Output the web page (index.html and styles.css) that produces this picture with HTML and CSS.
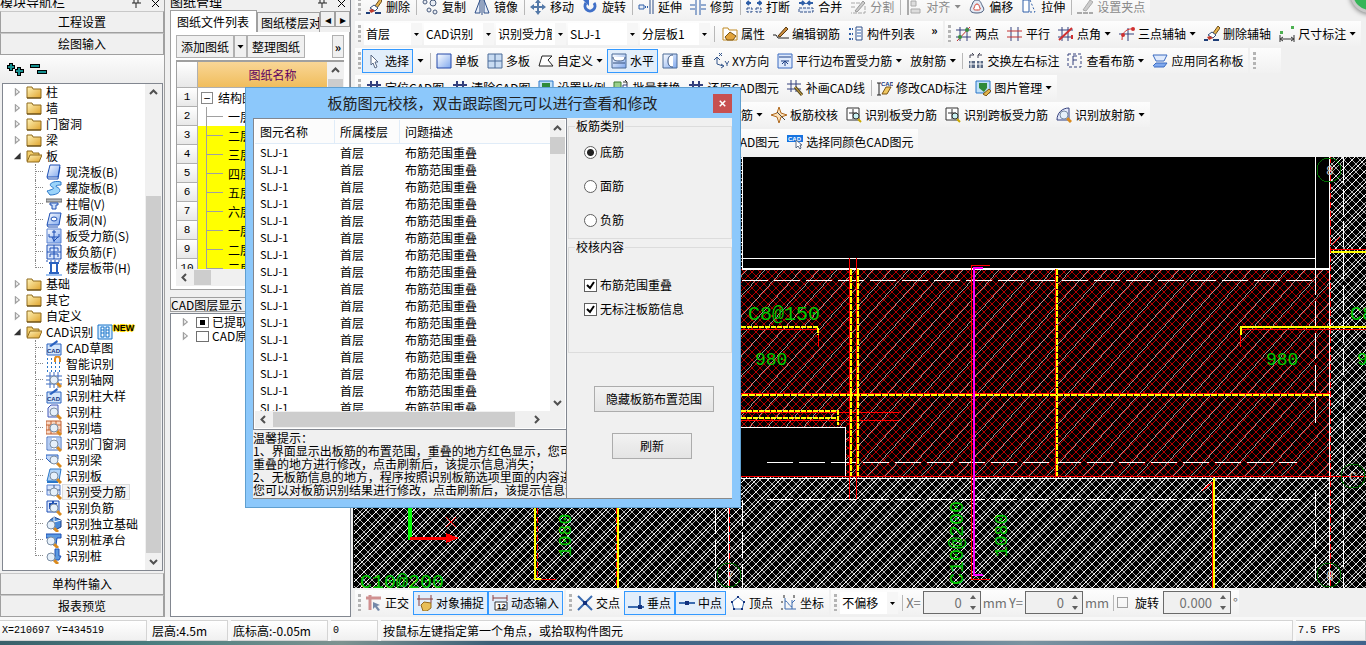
FILE: index.html
```html
<!DOCTYPE html>
<html lang="zh-CN">
<head>
    <meta charset="UTF-8">
    <meta name="viewport" content="width=device-width, initial-scale=1.0">
    <title>板筋图元校核</title>
    <link rel="stylesheet" href="styles.css">
</head>
<body>
    <!-- icon sprite -->
    <svg class="sprite" aria-hidden="true">
        <defs>
            <linearGradient id="gBlue" x1="0" y1="0" x2="1" y2="1"><stop offset="0" stop-color="#fff"/><stop offset="1" stop-color="#7fa8ee"/></linearGradient>
            <linearGradient id="gGold" x1="0" y1="0" x2="1" y2="1"><stop offset="0" stop-color="#fff3b8"/><stop offset="1" stop-color="#dfa32c"/></linearGradient>
        </defs>
        <symbol id="folder" viewBox="0 0 16 16"><path d="M1 3h5l1 2h8v9H1z" fill="url(#gGold)" stroke="#8f6a1c"/><path d="M1 14h14" stroke="#5c4310"/></symbol>
        <symbol id="folder-open" viewBox="0 0 16 16"><path d="M1 13V3h5l1 2h6v3" fill="#f3cf6c" stroke="#8f6a1c"/><path d="M4 7h12l-3 7H1z" fill="url(#gGold)" stroke="#8f6a1c"/></symbol>
        <symbol id="magnifier" viewBox="0 0 16 16"><path d="M11 11l4 4" stroke="#d98a1e" stroke-width="3"/><circle cx="8" cy="8" r="4" fill="#e6f0fa" stroke="#7c8ea3"/></symbol>
        <symbol id="slab" viewBox="0 0 16 16"><path d="M4 1h10l-2 12H1z" fill="url(#gBlue)" stroke="#1c4fb4"/><path d="M1 13l1 2h10l2-12" fill="none" stroke="#1c4fb4"/></symbol>
        <symbol id="spiral" viewBox="0 0 16 16"><path d="M15 2C8 0 1 4 6 7c3 1 2 2-5 4l3 4c9 0 13-5 7-8-3-1 0-2 4-2z" fill="#9bd4fa" stroke="#2a77c9"/></symbol>
        <symbol id="cap" viewBox="0 0 16 16"><path d="M0 3h16v3H0z" fill="#b8bcc0" stroke="#666"/><path d="M4 7h8v2h-2v4H6V9H4z" fill="#cfe0fa" stroke="#1c4fb4"/></symbol>
        <symbol id="hole" viewBox="0 0 16 16"><path d="M4 1h11l-2 12H1z" fill="url(#gBlue)" stroke="#1c4fb4"/><ellipse cx="8" cy="7" rx="3" ry="2" fill="#fff" stroke="#1c4fb4"/><path d="M1 13l1 2h10" fill="none" stroke="#1c4fb4"/></symbol>
        <symbol id="rebar" viewBox="0 0 16 16"><path d="M1 1h14v14H1z" fill="url(#gBlue)" stroke="#5a82d0"/><path d="M8 2v12M3 6v3h10V6M6 9l2 4 4-4M6 4h4" fill="none" stroke="#1c4fb4"/></symbol>
        <symbol id="negative" viewBox="0 0 16 16"><path d="M1 1h14v14H1z" fill="#dbe7fc" stroke="#1c4fb4"/><path d="M8 1v14M4 7V4h8v3M4 13v-3h8v3M1 8h14" fill="none" stroke="#1c4fb4"/></symbol>
        <symbol id="band" viewBox="0 0 16 16"><path d="M5 3v10M11 3v10M3 3h10M3 13h10" stroke="#2a62c0" stroke-width="2"/><path d="M0 15h16" stroke="#9cc0f0" stroke-width="2"/><path d="M0 1h16" stroke="#1c4fb4" stroke-dasharray="2"/></symbol>
        <symbol id="cad" viewBox="0 0 16 16"><path d="M1 4h14v11H1z" fill="#d4e6fb" stroke="#2a62c0"/><path d="M3 6l8-6 1 2-7 5z" fill="#2a62c0"/><text x="1" y="13" class="cad-label">CAD</text></symbol>
        <symbol id="smart" viewBox="0 0 16 16"><path d="M1 3h6M1 7h15M1 11h15M1 15h15" stroke="#2a77c9" stroke-width="2" stroke-dasharray="1 3"/><path d="M9 6V3a2 2 0 0 1 5 0v3" fill="none" stroke="#e08a1c" stroke-width="2"/></symbol>
        <symbol id="find-grid" viewBox="0 0 16 16"><path d="M4 0v16M8 0v16M12 0v16M0 4h16M0 8h16M0 12h16" stroke="#3a6bc0"/><use href="#magnifier"/></symbol>
        <symbol id="find-column" viewBox="0 0 16 16"><path d="M2 4l3-3h7v12H2z" fill="#e4e9fb" stroke="#4058b8"/><use href="#magnifier"/></symbol>
        <symbol id="find-wall" viewBox="0 0 16 16"><path d="M0 1h15v13H0z" fill="#fbd9c4" stroke="#c06030"/><path d="M0 5h15M0 10h15M5 1v4M10 1v4M3 5v5M5 10v4" stroke="#c06030"/><use href="#magnifier"/></symbol>
        <symbol id="find-door" viewBox="0 0 16 16"><path d="M1 1h14v13H1z" fill="#fff" stroke="#3a6bc0"/><path d="M2 2h4v11H2zM10 2h4v11h-4z" fill="#b4cdf5"/><use href="#magnifier"/></symbol>
        <symbol id="find-beam" viewBox="0 0 16 16"><path d="M0 3h12v4H5v4L0 6z" fill="#c2d8fa" stroke="#2a62c0"/><use href="#magnifier"/></symbol>
        <symbol id="find-slab" viewBox="0 0 16 16"><path d="M4 1h11l-2 12H1z" fill="#b2d4f8" stroke="#2a77c9"/><path d="M1 14h11" stroke="#2a77c9" stroke-width="2"/><use href="#magnifier"/></symbol>
        <symbol id="find-rebar" viewBox="0 0 16 16"><path d="M1 1h13v10H1z" fill="#dbe7fc" stroke="#5a82d0"/><path d="M8 1v10M1 6h13" stroke="#3a5890"/><use href="#magnifier"/></symbol>
        <symbol id="find-negative" viewBox="0 0 16 16"><path d="M1 1h12v11H1z" fill="#dbe7fc" stroke="#1c4fb4"/><path d="M4 9V4h7M7 1v11" fill="none" stroke="#1c4fb4" stroke-width="2"/><use href="#magnifier"/></symbol>
        <symbol id="find-base" viewBox="0 0 16 16"><path d="M3 5l5-4 7 3v7l-6 3-6-4z" fill="#4a8ad8" stroke="#1c3f84"/><path d="M8 1v5l7-2M8 6l-5-1" fill="none" stroke="#fff"/><use href="#magnifier" x="-3" y="1"/></symbol>
        <symbol id="find-pilecap" viewBox="0 0 16 16"><path d="M0 2h15v4h-4l-1 7H7V6H0z" fill="#5c9ae0" stroke="#1c4fb4"/><use href="#magnifier" x="-3" y="1"/></symbol>
        <symbol id="find-pile" viewBox="0 0 16 16"><path d="M9 1h4v7h2l-2 4H7V9h2z" fill="#5c9ae0" stroke="#1c4fb4"/><use href="#magnifier" x="-3" y="1"/></symbol>
        <symbol id="book" viewBox="0 0 16 16"><path d="M1 1h14v14H1z" fill="#d7ecff" stroke="#1673c8"/><path d="M4 3h3v10H4zM9 3h3v10H9zM4 6h3M9 6h3M4 9h3M9 9h3" fill="#fff" stroke="#1673c8"/></symbol>
        <symbol id="eraser" viewBox="0 0 16 16"><path d="M9 7l5-7 2 2-5 7z" fill="#e9b64f" stroke="#6b4e1e"/><path d="M4 9l4-3 4 3-3 3z" fill="#fff" stroke="#34507c"/><path d="M3 11l3-1 3 2-4 2z" fill="#c23b2c"/><path d="M0 14h4M9 14h6" stroke="#1d3d78" stroke-width="2"/></symbol>
        <symbol id="copy" viewBox="0 0 16 16"><g fill="#e8ecf3" stroke="#4a5c7c"><circle cx="3" cy="3" r="2"/><circle cx="11" cy="4" r="3"/><circle cx="7" cy="11" r="2"/><circle cx="13" cy="13" r="2"/></g></symbol>
        <symbol id="mirror" viewBox="0 0 16 16"><path d="M6 1v13H1zM10 1v13h5z" fill="#e6edf8" stroke="#2f4f88"/><path d="M8 0v16" stroke="#2f4f88"/></symbol>
        <symbol id="move" viewBox="0 0 16 16"><path d="M8 0l3 4H9v3h3V5l4 3-4 3V9H9v3h2l-3 4-3-4h2V9H4v2L0 8l4-3v2h3V4H5z" fill="#5479a8"/></symbol>
        <symbol id="rotate" viewBox="0 0 16 16"><path d="M4 4a5 5 0 1 0 8 0" fill="none" stroke="#4070c8" stroke-width="3"/><path d="M1 1h6v6z" fill="#4070c8"/></symbol>
        <symbol id="extend" viewBox="0 0 16 16"><path d="M1 6h5v4H1z" fill="#e6edf8" stroke="#2f5fa8"/><path d="M7 8h4" stroke="#2f5fa8" stroke-width="2" stroke-dasharray="1"/><path d="M12 1v14M15 1v14" stroke="#2f4f88"/></symbol>
        <symbol id="trim" viewBox="0 0 16 16"><path d="M6 0v16M10 0v16M0 6h5M11 6h5M0 10h5M11 10h5" stroke="#2f5fa8"/></symbol>
        <symbol id="break" viewBox="0 0 16 16"><path d="M5 4H1l2-2M1 4l2 2M11 4h4l-2-2M15 4l-2 2" fill="none" stroke="#2f5fa8" stroke-width="2"/><path d="M1 9h5v4H1zM10 9h5v4h-5z" fill="#e6edf8" stroke="#2f4f88" stroke-dasharray="3 1"/></symbol>
        <symbol id="merge" viewBox="0 0 16 16"><path d="M1 4h5L4 2M6 4L4 6M15 4h-5l2-2M10 4l2 2" fill="none" stroke="#2f5fa8" stroke-width="2"/><path d="M1 9h14v4H1z" fill="#e6edf8" stroke="#2f4f88" stroke-dasharray="3 1"/></symbol>
        <symbol id="split" viewBox="0 0 16 16"><path d="M1 4h10M15 7v7H1M1 8h5" fill="none" stroke="#a8a8a8" stroke-dasharray="4 1"/><path d="M5 12l8-10 2 2-8 9z" fill="#ccc" stroke="#999"/></symbol>
        <symbol id="align" viewBox="0 0 16 16"><path d="M2 0v16" stroke="#aaa" stroke-width="2"/><path d="M5 2h5v5H5zM5 10h9v4H5z" fill="#ddd" stroke="#aaa"/></symbol>
        <symbol id="offset" viewBox="0 0 16 16"><path d="M8 1c4 0 4 4 6 7s0 6-6 6-8-2-6-6 2-7 6-7z" fill="#e4eaf4" stroke="#4a5c7c"/><path d="M8 5c2 0 2 2 3 4s-1 2-3 2-4 0-3-2 1-4 3-4z" fill="#fff" stroke="#d03a2a"/></symbol>
        <symbol id="stretch" viewBox="0 0 16 16"><path d="M2 1h6v12H2z" fill="#fff" stroke="#2f5fa8"/><path d="M9 1l5 12H9" fill="none" stroke="#2f5fa8" stroke-dasharray="2"/></symbol>
        <symbol id="grip-point" viewBox="0 0 16 16"><path d="M0 14h16" stroke="#aaa" stroke-width="2" stroke-dasharray="5 1"/><path d="M6 11l7-10 3 2-7 9z" fill="#ccc" stroke="#aaa"/></symbol>
        <symbol id="props" viewBox="0 0 16 16"><path d="M1 2h5l1 2h8v10H1z" fill="#fff" stroke="#c08a24"/><path d="M3 11l5-5 6 4-3 4H5z" fill="#e2a33a" stroke="#7a5414"/></symbol>
        <symbol id="edit-bar" viewBox="0 0 16 16"><path d="M0 9h3l2 3h11" fill="none" stroke="#222"/><path d="M5 10l8-9 2 2-8 8z" fill="#c98a3a" stroke="#5a3a10"/></symbol>
        <symbol id="list" viewBox="0 0 16 16"><path d="M1 3h4M1 8h4M1 13h4" stroke="#2f5fa8" stroke-width="2" stroke-dasharray="2 1"/><path d="M8 1h6v13H8z" fill="#fff" stroke="#2f4f88"/><path d="M9 4h4M9 7h4M9 10h4" stroke="#2f5fa8"/></symbol>
        <symbol id="two-point" viewBox="0 0 16 16"><path d="M4 1v14M11 1v14M0 4h15M0 11h15" stroke="#34407c"/><path d="M1 15L14 1" stroke="#c23030"/><circle cx="4" cy="11" r="2" fill="#3a9040"/><circle cx="11" cy="4" r="2" fill="#3a9040"/></symbol>
        <symbol id="parallel" viewBox="0 0 16 16"><path d="M4 1v14M11 1v14" stroke="#34407c"/><path d="M0 5h15M0 11h15" stroke="#c23030"/></symbol>
        <symbol id="angle" viewBox="0 0 16 16"><path d="M4 1v14M10 1v14M0 4h15M0 11h15" stroke="#34407c"/><path d="M1 14L14 2M14 9v4" stroke="#d03030" stroke-width="2"/></symbol>
        <symbol id="three-point" viewBox="0 0 16 16"><path d="M9 2v13M0 8h15" stroke="#34407c"/><path d="M3 14C3 6 8 2 15 3" fill="none" stroke="#d03030"/><circle cx="14" cy="3" r="2" fill="#d03030"/><circle cx="4" cy="9" r="2" fill="#d03030"/></symbol>
        <symbol id="dimension" viewBox="0 0 16 16"><path d="M1 9v7M15 9v7M2 13h12M4 11l-3 2 3 2M12 11l3 2-3 2" fill="none" stroke="#333"/><path d="M1 5h3v3H1zM12 0h3v3h-3z" fill="#4caf50"/></symbol>
        <symbol id="cursor" viewBox="0 0 16 16"><path d="M5 2v10l2-2 2 5 2-1-2-5h3z" fill="#fff" stroke="#5a6a85"/></symbol>
        <symbol id="single" viewBox="0 0 16 16"><path d="M1 1h14v14H1z" fill="url(#gBlue)" stroke="#2448a8"/></symbol>
        <symbol id="multi" viewBox="0 0 16 16"><path d="M1 1h14v14H1z" fill="#c9dcf2" stroke="#4a6a98"/><path d="M8 1v14M1 8h14" stroke="#4a6a98"/></symbol>
        <symbol id="custom" viewBox="0 0 16 16"><path d="M4 3h10l-4 4 5 6H1z" fill="#fff" stroke="#222"/></symbol>
        <symbol id="horizontal" viewBox="0 0 16 16"><path d="M1 1h14v14H1z" fill="url(#gBlue)" stroke="#4a6a98"/><path d="M2 4c0 3 2 4 6 4s6-1 6-4" fill="#fff" stroke="#34507c"/><path d="M2 10h12" stroke="#34507c"/></symbol>
        <symbol id="vertical" viewBox="0 0 16 16"><path d="M1 1h14v14H1z" fill="url(#gBlue)" stroke="#4a6a98"/><path d="M11 2C7 2 6 5 6 8s1 6 5 6" fill="#fff" stroke="#34507c"/></symbol>
        <symbol id="xy" viewBox="0 0 16 16"><path d="M1 7l3-3 3 3M4 4v7l6 2M8 11l3 2-3 2M6 0l3 3M9 0L6 3M12 8l2 3 2-3M14 11v2" fill="none" stroke="#34568c"/></symbol>
        <symbol id="edge" viewBox="0 0 16 16"><path d="M1 1h14v14H1z" fill="#dfeafc" stroke="#3a6bc0"/><path d="M2 4h12M4 8h8M8 8v5M5 11l3-3 3 3" fill="none" stroke="#1c3f84"/></symbol>
        <symbol id="swap" viewBox="0 0 16 16"><path d="M2 5V2h4M10 5V2h4M6 2L4 0M10 2l2-2" fill="none" stroke="#445"/><path d="M1 8h6v7H1zM9 8h6v7H9z" fill="#5a6a85"/><path d="M1 11h14M3 8v7M12 8v7" stroke="#fff"/></symbol>
        <symbol id="view-bar" viewBox="0 0 16 16"><path d="M1 1h13v13H1z" fill="none" stroke="#34407c" stroke-dasharray="3 2"/><path d="M10 3H6v9M6 7h4" fill="none" stroke="#34407c"/></symbol>
        <symbol id="apply" viewBox="0 0 16 16"><path d="M1 2h14l-3 6H4z" fill="#dfeafc" stroke="#3a6bc0"/><path d="M1 13l3-3h11l-3 4H2" fill="#7fa8ee" stroke="#3a6bc0"/></symbol>
        <symbol id="hash" viewBox="0 0 16 16"><path d="M5 1v14M11 1v14M1 5h14M1 11h14" stroke="#34407c" stroke-width="2"/></symbol>
        <symbol id="picture" viewBox="0 0 16 16"><path d="M1 1h14v12H1z" fill="#bfe0f8" stroke="#2a77c9"/><path d="M4 3h8v5l-3 4-5-4z" fill="#2f8a3a"/><path d="M8 14l6-5 2 2-5 5z" fill="#e2b44a" stroke="#7a5414"/></symbol>
        <symbol id="batch" viewBox="0 0 16 16"><path d="M1 2h7v12H1z" fill="#9bd08c" stroke="#3b7a30"/><path d="M10 5h4v9h-4z" fill="#fff" stroke="#34407c"/><path d="M10 2h4l-2-2M14 2v3" fill="none" stroke="#333"/></symbol>
        <symbol id="patch" viewBox="0 0 16 16"><path d="M4 0v12M9 0v12M0 4h14M0 9h14" stroke="#34407c"/><path d="M8 7l7 8" stroke="#5a4a20" stroke-width="3"/><path d="M8 7l7 8" stroke="#d9b24c"/></symbol>
        <symbol id="edit-mark" viewBox="0 0 16 16"><path d="M2 3v12M0 3h4M0 15h4" stroke="#222"/><text x="4" y="6" class="cad-label">CAD</text><path d="M5 14l4-7h5l-4 7z" fill="#f0c860" stroke="#7a5414"/></symbol>
        <symbol id="check-bar" viewBox="0 0 16 16"><path d="M8 0l2 6 6 2-6 2-2 6-2-6-6-2 6-2z" fill="#fbe0b8" stroke="#b06a20"/><path d="M6 5l8 8" stroke="#444"/></symbol>
        <symbol id="find-bar" viewBox="0 0 16 16"><path d="M1 1h12v12H1z" fill="#fff" stroke="#333"/><path d="M7 2v10M3 6h8v4" fill="none" stroke="#333"/><circle cx="10" cy="9" r="3" fill="#c9f2f2" stroke="#333"/><path d="M12 12l3 3" stroke="#caa800" stroke-width="2"/></symbol>
        <symbol id="find-radial" viewBox="0 0 16 16"><path d="M1 13C1 6 6 1 13 1v12z" fill="#e4e9fb" stroke="#34407c"/><use href="#magnifier"/></symbol>
        <symbol id="same-color" viewBox="0 0 16 16"><path d="M0 1h16v7H0z" fill="#1673e0"/><text x="1" y="7" class="cad-label light">CAD</text><path d="M9 6v8l2-2 2 3 1-1-1-3h2z" fill="#fff" stroke="#5a6a85"/></symbol>
        <symbol id="ortho" viewBox="0 0 16 16"><path d="M0 3h15M4 0v15" stroke="#d09090" stroke-width="3"/><path d="M7 7l7 3-3 1 3 4-2 1-3-4-2 2z" fill="#7488a8"/></symbol>
        <symbol id="snap" viewBox="0 0 16 16"><path d="M2 0v11M14 0v8M0 4h16" stroke="#8a3c3c"/><path d="M4 10l3-3 7 1v5l-4 3H6z" fill="#e8bf58" stroke="#94691c"/></symbol>
        <symbol id="dynamic" viewBox="0 0 16 16"><path d="M1 0v6M15 0v6M1 3h14" stroke="#8a3c3c"/><path d="M3 7h12v8H3z" fill="#fff" stroke="#333"/><text x="5" y="14" class="cad-label dark">12</text></symbol>
        <symbol id="cross" viewBox="0 0 16 16"><path d="M1 1l14 14M15 1L1 15" stroke="#3a6bb0" stroke-width="2"/><path d="M6 6h4v4H6z" fill="#12307c"/></symbol>
        <symbol id="perp" viewBox="0 0 16 16"><path d="M0 12h16M12 1v11" stroke="#3a6bb0" stroke-width="2"/><path d="M10 10h4v4h-4z" fill="#12307c"/></symbol>
        <symbol id="mid" viewBox="0 0 16 16"><path d="M0 8h16" stroke="#3a6bb0" stroke-width="2"/><path d="M6 6h4v4H6z" fill="#12307c"/></symbol>
        <symbol id="vertex" viewBox="0 0 16 16"><path d="M8 2l6 5-2 7H4L2 7z" fill="#fff" stroke="#3a6bb0"/><path d="M7 1h2v2H7zM1 6h2v2H1zM13 6h2v2h-2zM3 13h2v2H3zM11 13h2v2h-2z" fill="#12307c"/></symbol>
        <symbol id="coord" viewBox="0 0 16 16"><path d="M4 3v11h11M4 6c3 0 3 4 7 6M11 8l3-3M11 5v9" fill="none" stroke="#3a6bb0"/><path d="M3 0v3M13 0v3M0 14h2M0 7h2" stroke="#222"/></symbol>
        <symbol id="chev-up" viewBox="0 0 9 9"><path d="M1 6l3.500-3.500L8 6" fill="none" stroke="#505050" stroke-width="2"/></symbol>
        <symbol id="chev-down" viewBox="0 0 9 9"><path d="M1 3l3.500 3.500L8 3" fill="none" stroke="#505050" stroke-width="2"/></symbol>
        <symbol id="chev-left" viewBox="0 0 9 9"><path d="M6 1L2.500 4.500 6 8" fill="none" stroke="#505050" stroke-width="2"/></symbol>
        <symbol id="chev-right" viewBox="0 0 9 9"><path d="M3 1l3.500 3.500L3 8" fill="none" stroke="#505050" stroke-width="2"/></symbol>
        <symbol id="pin" viewBox="0 0 9 9"><path d="M2 0v4M6 0v4M0 4h9M4 4v5" stroke="#222"/></symbol>
        <symbol id="close" viewBox="0 0 9 9"><path d="M1 1l7 7M8 1L1 8" stroke="currentColor"/></symbol>
    </svg>

    <div class="workspace">
        <aside class="navigator">
            <div class="panel-title"><span>模块导航栏</span><svg class="mini"><use href="#pin"/></svg><svg class="mini"><use href="#close"/></svg></div>
            <button class="section">工程设置</button>
            <button class="section">绘图输入</button>
            <div class="expand-bar">
                <svg width="40" height="14"><path d="M0 5h8M4 1v8M8 9h9M12 5v9M23 4h10M30 10h10" stroke="#000" stroke-width="4"/><path d="M1 5h6M4 2v6M9 9h7M12 6v7M24 4h8M31 10h8" stroke="#169090" stroke-width="2"/></svg>
            </div>
            <div class="tree-box">
                <ul class="tree">
                    <li><i class="closed"></i><svg><use href="#folder"/></svg>柱</li>
                    <li><i class="closed"></i><svg><use href="#folder"/></svg>墙</li>
                    <li><i class="closed"></i><svg><use href="#folder"/></svg>门窗洞</li>
                    <li><i class="closed"></i><svg><use href="#folder"/></svg>梁</li>
                    <li><i class="open"></i><svg><use href="#folder-open"/></svg>板</li>
                    <li class="branch">
                        <ul>
                            <li><svg><use href="#slab"/></svg>现浇板(B)</li>
                            <li><svg><use href="#spiral"/></svg>螺旋板(B)</li>
                            <li><svg><use href="#cap"/></svg>柱帽(V)</li>
                            <li><svg><use href="#hole"/></svg>板洞(N)</li>
                            <li><svg><use href="#rebar"/></svg>板受力筋(S)</li>
                            <li><svg><use href="#negative"/></svg>板负筋(F)</li>
                            <li><svg><use href="#band"/></svg>楼层板带(H)</li>
                        </ul>
                    </li>
                    <li><i class="closed"></i><svg><use href="#folder"/></svg>基础</li>
                    <li><i class="closed"></i><svg><use href="#folder"/></svg>其它</li>
                    <li><i class="closed"></i><svg><use href="#folder"/></svg>自定义</li>
                    <li><i class="open"></i><svg><use href="#folder-open"/></svg>CAD识别<svg><use href="#book"/></svg><b class="new">NEW</b></li>
                    <li class="branch">
                        <ul>
                            <li><svg><use href="#cad"/></svg>CAD草图</li>
                            <li><svg><use href="#smart"/></svg>智能识别</li>
                            <li><svg><use href="#find-grid"/></svg>识别轴网</li>
                            <li><svg><use href="#cad"/></svg>识别柱大样</li>
                            <li><svg><use href="#find-column"/></svg>识别柱</li>
                            <li><svg><use href="#find-wall"/></svg>识别墙</li>
                            <li><svg><use href="#find-door"/></svg>识别门窗洞</li>
                            <li><svg><use href="#find-beam"/></svg>识别梁</li>
                            <li><svg><use href="#find-slab"/></svg>识别板</li>
                            <li><svg><use href="#find-rebar"/></svg><span class="current">识别受力筋</span></li>
                            <li><svg><use href="#find-negative"/></svg>识别负筋</li>
                            <li><svg><use href="#find-base"/></svg>识别独立基础</li>
                            <li><svg><use href="#find-pilecap"/></svg>识别桩承台</li>
                            <li><svg><use href="#find-pile"/></svg>识别桩</li>
                        </ul>
                    </li>
                </ul>
                <div class="vscroll nav-scroll"><svg><use href="#chev-up"/></svg><div class="track"><div class="thumb"></div></div><svg><use href="#chev-down"/></svg></div>
            </div>
            <button class="section">单构件输入</button>
            <button class="section">报表预览</button>
        </aside>

        <aside class="drawings">
            <div class="panel-title"><span>图纸管理</span><svg class="mini"><use href="#pin"/></svg><svg class="mini"><use href="#close"/></svg></div>
            <div class="tabs">
                <button class="tab active">图纸文件列表</button>
                <button class="tab">图纸楼层对照表</button>
                <button class="tab-arrow">◂</button>
                <button class="tab-arrow">▸</button>
            </div>
            <div class="drawing-body">
                <div class="drawing-tools">
                    <button>添加图纸</button><button class="drop" aria-label="更多"><i class="caret"></i></button><button>整理图纸</button>
                    <button class="more">»</button>
                </div>
                <div class="sheet">
                    <table>
                        <thead><tr><th></th><th class="name">图纸名称</th></tr></thead>
                        <tbody>
                            <tr><th>1</th><td class="root"><i>−</i>结构图</td></tr>
                            <tr><th>2</th><td>一层</td></tr>
                            <tr class="hit"><th>3</th><td>二层</td></tr>
                            <tr class="hit"><th>4</th><td>三层</td></tr>
                            <tr class="hit"><th>5</th><td>四层</td></tr>
                            <tr class="hit"><th>6</th><td>五层</td></tr>
                            <tr class="hit"><th>7</th><td>六层</td></tr>
                            <tr class="hit"><th>8</th><td>一层</td></tr>
                            <tr class="hit"><th>9</th><td>二层</td></tr>
                            <tr class="hit"><th>10</th><td>三层</td></tr>
                        </tbody>
                    </table>
                    <div class="vscroll"><svg><use href="#chev-up"/></svg><div class="track"><div class="thumb"></div></div></div>
                </div>
                <div class="hscroll"><svg><use href="#chev-left"/></svg><div class="thumb"></div></div>
            </div>
            <div class="layer-title">CAD图层显示</div>
            <div class="layers">
                <label><i class="closed"></i><input type="checkbox" checked>已提取的CAD图层</label>
                <label><i class="closed"></i><input type="checkbox">CAD原始图层</label>
            </div>
        </aside>

        <main>
            <div class="toolbars">
                <div class="bar-row first">
                    <div class="strip">
                        <i class="grip"></i>
                        <button class="tool"><svg><use href="#eraser"/></svg>删除</button><i class="sep"></i>
                        <button class="tool"><svg><use href="#copy"/></svg>复制</button>
                        <button class="tool"><svg><use href="#mirror"/></svg>镜像</button><i class="sep"></i>
                        <button class="tool"><svg><use href="#move"/></svg>移动</button>
                        <button class="tool"><svg><use href="#rotate"/></svg>旋转</button><i class="sep"></i>
                        <button class="tool"><svg><use href="#extend"/></svg>延伸</button>
                        <button class="tool"><svg><use href="#trim"/></svg>修剪</button><i class="sep"></i>
                        <button class="tool"><svg><use href="#break"/></svg>打断</button>
                        <button class="tool"><svg><use href="#merge"/></svg>合并</button>
                        <button class="tool" disabled><svg><use href="#split"/></svg>分割</button><i class="sep"></i>
                        <button class="tool" disabled><svg><use href="#align"/></svg>对齐<i class="caret"></i></button>
                        <button class="tool"><svg><use href="#offset"/></svg>偏移</button>
                        <button class="tool"><svg><use href="#stretch"/></svg>拉伸</button><i class="sep"></i>
                        <button class="tool" disabled><svg><use href="#grip-point"/></svg>设置夹点</button>
                    </div>
                </div>
                <div class="bar-row">
                    <div class="strip combos">
                        <i class="grip"></i>
                        <select class="short" aria-label="楼层"><option>首层</option></select>
                        <select aria-label="模块"><option>CAD识别</option></select>
                        <select aria-label="构件类型"><option>识别受力筋</option></select>
                        <select aria-label="构件"><option>SLJ-1</option></select>
                        <select aria-label="分层"><option>分层板1</option></select>
                        <i class="sep"></i>
                        <button class="tool"><svg><use href="#props"/></svg>属性</button>
                        <button class="tool"><svg><use href="#edit-bar"/></svg>编辑钢筋</button>
                        <button class="tool"><svg><use href="#list"/></svg>构件列表</button>
                        <button class="overflow">»</button>
                    </div>
                    <div class="strip">
                        <i class="grip"></i>
                        <button class="tool"><svg><use href="#two-point"/></svg>两点</button>
                        <button class="tool"><svg><use href="#parallel"/></svg>平行</button>
                        <button class="tool"><svg><use href="#angle"/></svg>点角<i class="caret"></i></button>
                        <button class="tool"><svg><use href="#three-point"/></svg>三点辅轴<i class="caret"></i></button>
                        <button class="tool"><svg><use href="#eraser"/></svg>删除辅轴</button>
                        <button class="tool"><svg><use href="#dimension"/></svg>尺寸标注<i class="caret"></i></button>
                    </div>
                </div>
                <div class="bar-row">
                    <div class="strip">
                        <i class="grip"></i>
                        <button class="tool on"><svg><use href="#cursor"/></svg>选择</button><button class="tool" aria-label="选择方式"><i class="caret"></i></button><i class="sep"></i>
                        <button class="tool"><svg><use href="#single"/></svg>单板</button>
                        <button class="tool"><svg><use href="#multi"/></svg>多板</button>
                        <button class="tool"><svg><use href="#custom"/></svg>自定义<i class="caret"></i></button>
                        <button class="tool on"><svg><use href="#horizontal"/></svg>水平</button>
                        <button class="tool"><svg><use href="#vertical"/></svg>垂直</button>
                        <button class="tool"><svg><use href="#xy"/></svg>XY方向</button>
                        <button class="tool"><svg><use href="#edge"/></svg>平行边布置受力筋<i class="caret"></i></button>
                        <button class="tool">放射筋<i class="caret"></i></button><i class="sep"></i>
                        <button class="tool"><svg><use href="#swap"/></svg>交换左右标注</button>
                        <button class="tool"><svg><use href="#view-bar"/></svg>查看布筋<i class="caret"></i></button>
                        <button class="tool"><svg><use href="#apply"/></svg>应用同名称板</button>
                    </div>
                    <div class="strip blank"><i class="grip"></i></div>
                </div>
                <div class="bar-row">
                    <div class="strip">
                        <i class="grip"></i>
                        <button class="tool"><svg><use href="#hash"/></svg>定位CAD图</button>
                        <button class="tool"><svg><use href="#hash"/></svg>清除CAD图</button>
                        <button class="tool"><svg><use href="#picture"/></svg>设置比例</button>
                        <button class="tool"><svg><use href="#batch"/></svg>批量替换</button>
                        <button class="tool"><svg><use href="#hash"/></svg>还原CAD图元</button>
                        <button class="tool"><svg><use href="#patch"/></svg>补画CAD线</button><i class="sep"></i>
                        <button class="tool"><svg><use href="#edit-mark"/></svg>修改CAD标注</button>
                        <button class="tool"><svg><use href="#picture"/></svg>图片管理<i class="caret"></i></button>
                    </div>
                </div>
                <div class="bar-row">
                    <div class="strip reinforce">
                        <button class="tool">筋<i class="caret"></i></button>
                        <button class="tool"><svg><use href="#check-bar"/></svg>板筋校核</button>
                        <button class="tool"><svg><use href="#find-bar"/></svg>识别板受力筋</button>
                        <button class="tool"><svg><use href="#find-bar"/></svg>识别跨板受力筋</button>
                        <button class="tool"><svg><use href="#find-radial"/></svg>识别放射筋<i class="caret"></i></button>
                    </div>
                </div>
                <div class="bar-row">
                    <div class="strip picking">
                        <button class="tool">CAD图元</button>
                        <button class="tool"><svg><use href="#same-color"/></svg>选择同颜色CAD图元</button>
                    </div>
                </div>
            </div>

            <svg class="canvas" viewBox="353 157 1013 431" preserveAspectRatio="xMinYMin slice" shape-rendering="crispEdges">
                <defs>
                    <pattern id="lattice" width="8" height="8" patternUnits="userSpaceOnUse">
                        <path d="M-1 9L9 -1M-1 -1L9 9" stroke="#fff" stroke-width=".7"/>
                    </pattern>
                    <pattern id="strokes" width="12" height="12" patternUnits="userSpaceOnUse">
                        <path d="M-1 13L13 -1" stroke="#fff" stroke-width="1.400"/>
                    </pattern>
                    <pattern id="latticeRed" width="8" height="8" patternUnits="userSpaceOnUse">
                        <path d="M-1 9L9 -1M-1 -1L9 9" stroke="#f00" stroke-width=".7"/>
                    </pattern>
                    <pattern id="strokesGray" width="18" height="20" patternUnits="userSpaceOnUse">
                        <path d="M-1 21L19 -1" stroke="#c8b4b4" stroke-width=".8"/>
                    </pattern>
                </defs>
                <rect x="354" y="157" width="1012" height="431" fill="url(#lattice)"/>
                <rect x="354" y="157" width="1012" height="431" fill="url(#strokes)"/>
                <rect x="742" y="157" width="588" height="112" fill="#000"/>
                <rect x="735" y="269" width="595" height="208" fill="#000"/>
                <rect x="735" y="269" width="595" height="208" fill="url(#latticeRed)"/>
                <rect x="735" y="269" width="595" height="208" fill="url(#strokesGray)"/>
                <rect x="735" y="427" width="110" height="50" fill="#000"/>
                <g fill="none" stroke="#fff">
                    <path d="M742.500 157V269M742 258.500H1316M1315.500 157V269M735 427.500H845.500V476"/>
                    <path d="M742 269H1330" stroke-width="2"/>
                    <path d="M735 478.500H1330"/>
                    <path d="M742 280.500H1316M767 462.500H1297M1315.500 269V427" stroke-dasharray="26 6"/>
                    <path d="M767 499.500H1300M1343.500 157V588M1315.500 490V588M742.500 500V588M715.500 508V588" stroke-dasharray="26 6"/>
                    <path d="M1329.500 157V588M728.500 508V588"/>
                </g>
                <g fill="none" stroke="#f00">
                    <path d="M1330.500 157V588M729.500 508V588M537.500 508V579M616.500 508V588" stroke-dasharray="6 3"/>
                    <path d="M849.500 258V499M856.500 258V499M990 265.500H971.500V579.500H990M1055.500 269V478M735 393.500H1330M735 412.500H899M735 420.500H899M735 476.500H1366"/>
                    <path d="M735 329.500H818.500V347M1366 329.500H1240.500V347M1331 249.500H1366M1212.500 482V588M537 579.500H556"/>
                    <path d="M1202 491l10-9M1332 245l8-8M446 517l10 10M456 517l-10 10"/>
                </g>
                <g fill="none" stroke="#ff0" stroke-width="2">
                    <path d="M851 269V476M858 269V476M1057 269V476M735 395H1330" stroke-dasharray="6 1"/>
                    <path d="M735 327H818V335M735 411H838V425M735 418H838" stroke-dasharray="5 1"/>
                    <path d="M1366 327H1241V335M1331 252H1366M1214 478V588M535 508V579H541M618 508V588"/>
                </g>
                <path d="M983 268H974V575H983" fill="none" stroke="#f0f" stroke-width="2"/>
                <path d="M409.500 508V540" stroke="#0f0" stroke-width="4"/>
                <path d="M410 538H448" stroke="#f00" stroke-width="3"/>
                <path d="M446 533l13 5-13 5z" fill="#f00"/>
                <g fill="none" stroke="#006a00">
                    <circle cx="1329" cy="170" r="12"/><circle cx="1353" cy="476" r="12"/><circle cx="1329" cy="575" r="12"/><circle cx="729" cy="575" r="12"/>
                </g>
                <g class="axis"><text x="1326" y="175">8</text><text x="1349" y="481">C</text><text x="1326" y="580">8</text><text x="726" y="580">7</text></g>
                <g class="bar-text">
                    <text x="748" y="320">C8@150</text><text x="1350" y="320">C8@150</text><text x="360" y="588">C10@200</text>
                    <text transform="translate(963 585) rotate(-90)">C10@200</text>
                </g>
                <g class="length-text">
                    <text x="755" y="365">980</text><text x="1266" y="365">980</text><text x="1357" y="365">980</text>
                    <text transform="translate(1007 557) rotate(-90)">1080</text>
                    <text transform="translate(571 557) rotate(-90)">1080</text>
                </g>
            </svg>

            <div class="bar-row snapbar">
                <div class="strip">
                    <i class="grip"></i>
                    <button class="tool"><svg><use href="#ortho"/></svg>正交</button>
                    <button class="tool on"><svg><use href="#snap"/></svg>对象捕捉</button>
                    <button class="tool on"><svg><use href="#dynamic"/></svg>动态输入</button>
                </div>
                <div class="strip">
                    <i class="grip"></i>
                    <button class="tool"><svg><use href="#cross"/></svg>交点</button>
                    <button class="tool on"><svg><use href="#perp"/></svg>垂点</button>
                    <button class="tool on"><svg><use href="#mid"/></svg>中点</button>
                    <button class="tool"><svg><use href="#vertex"/></svg>顶点</button>
                    <button class="tool"><svg><use href="#coord"/></svg>坐标</button>
                </div>
                <div class="strip offsets">
                    <i class="grip"></i>
                    <select class="short" aria-label="偏移方式"><option>不偏移</option></select>
                    <i class="sep"></i>
                    <label for="offX">X=</label><span class="spin"><input id="offX" value="0"><i></i></span><span>mm</span>
                    <label for="offY">Y=</label><span class="spin"><input id="offY" value="0"><i></i></span><span>mm</span>
                    <i class="sep"></i>
                    <input type="checkbox" id="turn"><label for="turn" class="turn">旋转</label>
                    <span class="spin wide"><input value="0.000" aria-label="角度"><i></i></span><span>°</span>
                </div>
            </div>
        </main>
    </div>

    <footer class="statusbar">
        <span class="cell pos mono">X=210697 Y=434519</span>
        <span class="cell height">层高:4.5m</span>
        <span class="cell base">底标高:-0.05m</span>
        <span class="cell count mono">0</span>
        <span class="cell hint">按鼠标左键指定第一个角点，或拾取构件图元</span>
        <span class="cell fps mono">7.5 FPS</span>
    </footer>
    <div class="desktop"></div>

    <div class="badge"></div>

    <div class="dialog" role="dialog" aria-labelledby="dialogTitle">
        <div class="dialog-title">
            <h1 id="dialogTitle">板筋图元校核，双击跟踪图元可以进行查看和修改</h1>
            <button class="close" aria-label="关闭"><svg class="mini"><use href="#close"/></svg></button>
        </div>
        <div class="dialog-body">
            <div class="results">
                <div class="list">
                    <div class="list-view">
                        <table>
                            <thead><tr><th>图元名称</th><th>所属楼层</th><th>问题描述</th></tr></thead>
                            <tbody>
                                <tr><td>SLJ-1</td><td>首层</td><td>布筋范围重叠</td></tr>
                                <tr><td>SLJ-1</td><td>首层</td><td>布筋范围重叠</td></tr>
                                <tr><td>SLJ-1</td><td>首层</td><td>布筋范围重叠</td></tr>
                                <tr><td>SLJ-1</td><td>首层</td><td>布筋范围重叠</td></tr>
                                <tr><td>SLJ-1</td><td>首层</td><td>布筋范围重叠</td></tr>
                                <tr><td>SLJ-1</td><td>首层</td><td>布筋范围重叠</td></tr>
                                <tr><td>SLJ-1</td><td>首层</td><td>布筋范围重叠</td></tr>
                                <tr><td>SLJ-1</td><td>首层</td><td>布筋范围重叠</td></tr>
                                <tr><td>SLJ-1</td><td>首层</td><td>布筋范围重叠</td></tr>
                                <tr><td>SLJ-1</td><td>首层</td><td>布筋范围重叠</td></tr>
                                <tr><td>SLJ-1</td><td>首层</td><td>布筋范围重叠</td></tr>
                                <tr><td>SLJ-1</td><td>首层</td><td>布筋范围重叠</td></tr>
                                <tr><td>SLJ-1</td><td>首层</td><td>布筋范围重叠</td></tr>
                                <tr><td>SLJ-1</td><td>首层</td><td>布筋范围重叠</td></tr>
                                <tr><td>SLJ-1</td><td>首层</td><td>布筋范围重叠</td></tr>
                                <tr><td>SLJ-1</td><td>首层</td><td>布筋范围重叠</td></tr>
                            </tbody>
                        </table>
                        <div class="vscroll"><svg><use href="#chev-up"/></svg><div class="track"><div class="thumb"></div></div><svg><use href="#chev-down"/></svg></div>
                    </div>
                    <div class="hscroll"><svg><use href="#chev-left"/></svg><div class="thumb"></div><svg class="end"><use href="#chev-right"/></svg></div>
                </div>
                <div class="notes">
                    <p>温馨提示：</p>
                    <p>1、界面显示出板筋的布置范围，重叠的地方红色显示，您可以对</p>
                    <p>重叠的地方进行修改，点击刷新后，该提示信息消失；</p>
                    <p>2、无板筋信息的地方，程序按照识别板筋选项里面的内容进行</p>
                    <p>您可以对板筋识别结果进行修改，点击刷新后，该提示信息消失</p>
                </div>
            </div>
            <form class="options">
                <fieldset class="kinds">
                    <legend>板筋类别</legend>
                    <label><input type="radio" name="kind" checked>底筋</label>
                    <label><input type="radio" name="kind">面筋</label>
                    <label><input type="radio" name="kind">负筋</label>
                </fieldset>
                <fieldset class="checks">
                    <legend>校核内容</legend>
                    <label><input type="checkbox" checked>布筋范围重叠</label>
                    <label><input type="checkbox" checked>无标注板筋信息</label>
                </fieldset>
                <button type="button" class="wide-btn">隐藏板筋布置范围</button>
                <button type="button" class="small-btn">刷新</button>
            </form>
        </div>
    </div>
</body>
</html>
```
FILE: styles.css
```css
* {
    box-sizing: border-box;
}

body {
    margin: 0;
    height: 100vh;
    display: flex;
    flex-direction: column;
    overflow: hidden;
    position: relative;
    background: #f0f0f0;
    color: #000;
    font: 12px/16px "Noto Sans CJK SC", sans-serif;
}

button,
input,
select {
    font: inherit;
    color: inherit;
    margin: 0;
}

button {
    padding: 0;
    white-space: nowrap;
}

svg {
    width: 16px;
    height: 16px;
    flex: none;
}

.sprite {
    position: absolute;
    width: 0;
    height: 0;
}

.cad-label {
    font: bold 6px "Liberation Sans", sans-serif;
    fill: #12307c;
}

.cad-label.light {
    fill: #fff;
}

.cad-label.dark {
    fill: #000;
    font-size: 8px;
}

.mini {
    width: 9px;
    height: 9px;
}

.workspace {
    flex: 1;
    min-height: 0;
    display: flex;
    gap: 5px;
}

.panel-title {
    height: 8px;
    flex: none;
    display: flex;
    align-items: flex-end;
    gap: 10px;
    padding-right: 4px;
    overflow: hidden;
}

.panel-title span {
    flex: 1;
    font-size: 13px;
    line-height: 13px;
}

/* Left module navigator */
.navigator {
    width: 165px;
    flex: none;
    display: flex;
    flex-direction: column;
    border-right: 1px solid #a0a0a0;
}

.navigator .panel-title {
    margin-bottom: 3px;
}

.section {
    height: 22px;
    flex: none;
    border: 1px solid #a0a0a0;
    border-top-color: #c8c8c8;
    background: #f0f0f0;
}

.expand-bar {
    height: 28px;
    flex: none;
    padding: 7px;
    background: linear-gradient(#fcfcfc, #ededed);
}

.expand-bar svg {
    width: 40px;
    height: 14px;
}

.tree-box {
    flex: 1;
    min-height: 0;
    display: flex;
    margin: 0 1px 2px 2px;
    border: 1px solid #828790;
    background: #fff;
    overflow: hidden;
}

.tree {
    flex: 1;
    min-width: 0;
}

.tree,
.tree ul {
    margin: 0;
    padding: 0;
    list-style: none;
}

.tree li {
    height: 16px;
    display: flex;
    align-items: center;
    gap: 4px;
    padding-left: 10px;
    white-space: nowrap;
}

.tree .branch {
    display: block;
    height: auto;
    padding-left: 32px;
}

.tree .branch li {
    padding-left: 0;
}

.branch li::before {
    content: "";
    width: 7px;
    height: 16px;
    margin-right: -1px;
    border-left: 1px dotted #888;
    background: linear-gradient(90deg, #888 50%, transparent 50%) 0 7px / 2px 1px repeat-x;
}

.branch li:last-child::before {
    height: 8px;
    align-self: flex-start;
    background-position: 0 7px;
}

.closed,
.open {
    width: 9px;
    height: 9px;
    flex: none;
}

.closed {
    background: #a0a0a0;
    clip-path: polygon(20% 0, 80% 50%, 20% 100%, 20% 80%, 60% 50%, 36% 24%, 36% 78%, 20% 90%);
}

.open {
    background: #333;
    clip-path: polygon(85% 10%, 85% 85%, 10% 85%);
}

.current {
    padding: 0 3px;
    margin-left: -4px;
    border: 1px solid #dcdcdc;
    background: #f5f5f5;
    line-height: 14px;
}

.new {
    align-self: flex-start;
    margin-left: -4px;
    font: bold 9px/9px "Liberation Sans", sans-serif;
    text-shadow: 1px 0 #ffd800, -1px 0 #ffd800, 0 1px #ffd800, 0 -1px #ffd800, 0 0 2px #ffd800;
}

/* Scrollbars */
.vscroll {
    width: 17px;
    flex: none;
    display: flex;
    flex-direction: column;
    align-items: center;
    padding: 4px 0;
    gap: 4px;
    background: #f0f0f0;
}

.vscroll svg,
.hscroll svg {
    width: 9px;
    height: 9px;
}

.track {
    flex: 1;
    width: 15px;
}

.thumb {
    background: #cdcdcd;
}

.vscroll .thumb {
    height: 17px;
}

.nav-scroll .track {
    display: flex;
    align-items: flex-end;
}

.nav-scroll .thumb {
    width: 15px;
    height: 79%;
}

.hscroll {
    height: 17px;
    flex: none;
    display: flex;
    align-items: center;
    padding: 0 4px;
    gap: 5px;
    background: #f0f0f0;
}

.hscroll .thumb {
    width: 17px;
    height: 15px;
}

/* Drawing manager */
.drawings {
    width: 181px;
    flex: none;
    display: flex;
    flex-direction: column;
    border-right: 1px solid #828790;
}

.tabs {
    display: flex;
    height: 24px;
    flex: none;
    padding-top: 2px;
    align-items: stretch;
}

.tab {
    border: 1px solid #a0a0a0;
    border-bottom: 0;
    background: #f0f0f0;
    margin-top: 2px;
    flex: 1;
    min-width: 0;
    overflow: hidden;
    text-align: left;
    padding: 0 3px;
}

.tab.active {
    flex: none;
    width: 87px;
    margin-top: 0;
    padding: 0 6px;
    background: #fff;
}

.tab-arrow {
    width: 15px;
    height: 16px;
    margin-top: 1px;
    border: 1px solid #a0a0a0;
    background: #f0f0f0;
    line-height: 12px;
}

.drawing-body {
    height: 258px;
    flex: none;
    display: flex;
    flex-direction: column;
    padding: 3px 5px;
    margin-bottom: 6px;
    border: 1px solid #a0a0a0;
    border-top: 0;
    background: #fff;
}

.drawing-tools {
    display: flex;
    height: 23px;
    flex: none;
    margin-bottom: 2px;
}

.drawing-tools button {
    width: 58px;
    border: 1px solid #b0b0b0;
    background: #f0f0f0;
}

.drawing-tools .drop {
    width: 13px;
}

.drawing-tools .more {
    width: 12px;
    margin-left: auto;
    font-weight: bold;
}

.sheet {
    flex: 1;
    min-height: 0;
    display: flex;
    overflow: hidden;
    border-top: 2px solid #a0a0a0;
    border-left: 1px solid #a0a0a0;
}

.sheet table {
    flex: 1;
    border-collapse: separate;
    border-spacing: 0;
    table-layout: fixed;
    height: 216px;
}

.sheet th {
    width: 21px;
    height: 19px;
    padding: 0;
    font-weight: normal;
    font-family: "Liberation Mono", monospace;
    font-size: 11px;
    background: linear-gradient(#fff, #e8e8e8);
    border-right: 1px solid #b0b0b0;
    border-bottom: 1px solid #b0b0b0;
    line-height: 18px;
}

.sheet thead th {
    height: 26px;
}

.sheet .name {
    width: auto;
    padding-left: 20px;
    border-right: 0;
    background: linear-gradient(#f9d696, #f0bd5c);
    color: #600060;
    font: 12px/18px "Noto Sans CJK SC", sans-serif;
}

.sheet td {
    height: 19px;
    padding: 0 0 0 30px;
    line-height: 19px;
    background: linear-gradient(#a0a0a0, #a0a0a0) 8px 0 / 1px 100% no-repeat, linear-gradient(#a0a0a0, #a0a0a0) 8px 9px / 17px 1px no-repeat;
}

.sheet .root {
    padding-left: 3px;
    background: none;
}

.root i {
    display: inline-block;
    width: 12px;
    height: 12px;
    margin-right: 5px;
    border: 1px solid #888;
    font-style: normal;
    line-height: 10px;
    text-align: center;
}

.hit td {
    background-color: #ff0;
}

.layer-title {
    height: 15px;
    flex: none;
    margin: 1px 0;
    border: 1px solid #a0a0a0;
    line-height: 13px;
}

.layers {
    flex: 1;
    display: flex;
    flex-direction: column;
    padding: 1px 10px;
    border: 1px solid #828790;
    border-width: 1px 0 1px 1px;
    background: #fff;
    overflow: hidden;
}

.layers label {
    height: 14px;
    display: flex;
    align-items: center;
    gap: 3px;
    line-height: 14px;
    white-space: nowrap;
}

.layers input {
    appearance: none;
    width: 13px;
    height: 11px;
    flex: none;
    margin-left: 3px;
    border: 1px solid #707070;
    background: #fff;
}

.layers input:checked {
    background: linear-gradient(#000, #000) center / 5px 5px no-repeat;
}

/* Toolbars */
main {
    flex: 1;
    min-width: 0;
    display: flex;
    flex-direction: column;
    margin-left: -3px;
}

.toolbars {
    height: 157px;
    flex: none;
    padding-left: 2px;
    overflow: hidden;
}

.bar-row {
    height: 27px;
    display: flex;
    align-items: center;
    gap: 2px;
}

.bar-row.first {
    height: 20px;
    align-items: flex-start;
    margin-top: -6px;
    margin-bottom: 6px;
}

.strip {
    height: 25px;
    flex: none;
    display: flex;
    align-items: center;
    padding-right: 1px;
    background: linear-gradient(#fdfdfd, #f1f1f1);
}

.strip.blank {
    width: 31px;
}

.grip {
    width: 3px;
    height: 17px;
    margin: 0 1px 0 3px;
    flex: none;
    background: repeating-linear-gradient(#b4b4b4 0 3px, transparent 3px 5px);
}

.sep {
    width: 1px;
    height: 16px;
    margin: 0 1px 0 2px;
    flex: none;
    background: #b8b8b8;
}

.tool {
    height: 24px;
    flex: none;
    display: flex;
    align-items: center;
    gap: 3px;
    padding: 0 3px;
    border: 1px solid transparent;
    background: none;
}

.first .tool {
    gap: 4px;
}

.tool:disabled {
    color: #8a8a8a;
}

.tool.on {
    border-color: #3399ff;
    background: #e2eefb;
}

.caret {
    width: 7px;
    height: 4px;
    flex: none;
    background: currentColor;
    clip-path: polygon(0 0, 100% 0, 50% 100%);
}

.drop .caret {
    display: block;
    margin: 0 auto;
}

.reinforce {
    padding-left: 382px;
}

.picking {
    padding-left: 373px;
}

.combos {
    gap: 2px;
}

.combos .tool + .tool {
    margin-left: -2px;
}

select {
    width: 70px;
    height: 22px;
    padding: 0 14px 0 2px;
    border: 0;
    border-radius: 0;
    appearance: none;
    overflow: hidden;
    text-overflow: clip;
    background: url("data:image/svg+xml,%3Csvg xmlns='http://www.w3.org/2000/svg' width='11' height='24'%3E%3Cpath d='M0 0h11v24H0z' fill='%23f6f6f6'/%3E%3Cpath d='M3 11h5l-2.500 3z'/%3E%3C/svg%3E") right center no-repeat #fff;
}

select.short {
    width: 58px;
}

.overflow {
    width: 21px;
    height: 24px;
    padding-left: 6px;
    padding-bottom: 8px;
    border: 0;
    background: none;
    font-weight: bold;
}

.canvas {
    display: block;
    width: 100%;
    height: auto;
    flex: 1;
    min-height: 0;
    background: #000;
}

.bar-text {
    fill: #00c800;
    font: 20px "Liberation Mono", monospace;
}

.length-text {
    fill: #00c800;
    font: 18px "Liberation Mono", monospace;
}

.axis {
    fill: #ccc;
    font: 13px "Liberation Mono", monospace;
}

.snapbar {
    height: 29px;
    flex: none;
    padding-left: 2px;
}

.offsets {
    gap: 2px;
    color: #707070;
}

.offsets > span,
.offsets > label {
    font-size: 13px;
}

.offsets select {
    color: #000;
}

.offsets > .turn {
    padding: 0 2px 0 5px;
    color: #000;
    font-size: 12px;
}

.offsets input[type="checkbox"] {
    appearance: none;
    width: 11px;
    height: 11px;
    border: 1px solid #a0a0a0;
}

.spin {
    width: 58px;
    height: 23px;
    display: flex;
    align-items: center;
    border: 1px solid #6a6a6a;
    background: #f0f0f0;
}

.spin.wide {
    width: 68px;
}

.spin input {
    flex: 1;
    min-width: 0;
    border: 0;
    padding: 0 4px 0 0;
    background: none;
    text-align: right;
}

.spin i {
    width: 14px;
    height: 17px;
    background: url("data:image/svg+xml,%3Csvg xmlns='http://www.w3.org/2000/svg' width='14' height='17'%3E%3Cpath d='M4 5l3-4 3 4zM4 12l3 4 3-4z' fill='%23606060'/%3E%3C/svg%3E") no-repeat;
}

/* Status bar */
.statusbar {
    height: 24px;
    flex: none;
    display: flex;
    gap: 3px;
    padding: 3px 0 0;
    background: #f8f8f8;
}

.cell {
    height: 21px;
    padding-left: 2px;
    border: 1px solid #d4d4d4;
    border-left-width: 0;
    line-height: 19px;
    white-space: nowrap;
    background: linear-gradient(#fff, #f0f0f0);
}

.mono {
    font-family: "Liberation Mono", monospace;
    font-size: 10px;
}

.pos {
    width: 147px;
}

.height {
    width: 78px;
}

.base {
    width: 97px;
}

.count {
    width: 47px;
}

.hint {
    flex: 1;
}

.fps {
    width: 70px;
}

.desktop {
    height: 4px;
    flex: none;
    background: linear-gradient(90deg, #39606a, #4c7f80 12%, #7e9290 25%, #3c6078 36%, #4a6d90 60%, #7b93a0 75%, #3f648c);
}

.badge {
    position: absolute;
    top: -27px;
    right: -24px;
    width: 40px;
    height: 40px;
    border: 3px solid #c8c8c8;
    border-radius: 50%;
    background: #35b558;
    box-shadow: 0 1px 5px rgba(0, 0, 0, 0.5);
}

/* Check dialog */
.dialog {
    position: absolute;
    left: 245px;
    top: 87px;
    width: 496px;
    height: 421px;
    display: flex;
    flex-direction: column;
    padding: 0 8px 8px 7px;
    border: 1px solid #5f9fd0;
    background: #8cc8fb;
}

.dialog-title {
    height: 30px;
    flex: none;
    display: flex;
    align-items: center;
    padding-left: 19px;
}

.dialog-title h1 {
    flex: 1;
    margin: 0;
    font-size: 15px;
    font-weight: normal;
    line-height: 20px;
    text-align: center;
    color: #222;
}

.close {
    width: 19px;
    height: 19px;
    display: flex;
    align-items: center;
    justify-content: center;
    border: 0;
    background: #c75050;
    color: #fff;
}

.close .mini {
    width: 7px;
    height: 7px;
    stroke-width: 2px;
}

.dialog-body {
    flex: 1;
    min-height: 0;
    display: flex;
    border-bottom: 1px solid #8a8a8a;
    background: #f0f0f0;
}

.results {
    width: 314px;
    flex: none;
    display: flex;
    flex-direction: column;
    border-right: 1px solid #828790;
}

.list {
    height: 312px;
    flex: none;
    display: flex;
    flex-direction: column;
    padding: 1px;
    border: 1px solid #828790;
    border-right: 0;
    background: #fff;
}

.list-view {
    flex: 1;
    min-height: 0;
    display: flex;
    overflow: hidden;
}

.list-view table {
    flex: 1;
    align-self: flex-start;
    border-collapse: separate;
    border-spacing: 0;
    table-layout: fixed;
}

.list th {
    height: 24px;
    padding: 0 0 0 5px;
    border-right: 1px solid #e0ecf8;
    border-bottom: 1px solid #e0ecf8;
    background: #fcfcfc;
    font-weight: normal;
    text-align: left;
}

.list th:first-child {
    width: 80px;
}

.list th:nth-child(2) {
    width: 65px;
}

.list th:last-child {
    border-right: 0;
}

.list td {
    height: 17px;
    padding: 0 0 0 5px;
    line-height: 17px;
    white-space: nowrap;
}

.list td:first-child {
    font-size: 11px;
}

.list-view .vscroll {
    width: 15px;
}

.list .hscroll .thumb {
    width: 242px;
}

.list .end {
    margin: 0 20px 0 auto;
}

.notes {
    flex: 1;
    overflow: hidden;
    padding-top: 1px;
}

.notes p {
    margin: 0;
    line-height: 13px;
    white-space: nowrap;
}

.options {
    flex: 1;
    display: flex;
    flex-direction: column;
    align-items: center;
    padding-left: 1px;
}

fieldset {
    width: 100%;
    margin: 0;
    padding: 0 15px;
    border: 1px solid #dcdcdc;
}

legend {
    margin-left: -9px;
    padding: 0 1px;
    line-height: 16px;
}

fieldset label {
    display: flex;
    align-items: center;
    gap: 3px;
}

fieldset input {
    appearance: none;
    width: 13px;
    height: 13px;
    border: 1px solid #606060;
    background: #fff;
}

.kinds {
    height: 121px;
}

.kinds label {
    height: 34px;
}

.kinds legend {
    margin-bottom: 1px;
}

.kinds input {
    border-radius: 50%;
}

.kinds input:checked {
    background: radial-gradient(circle, #222 0 3px, #fff 4px);
}

.checks {
    height: 114px;
    margin-bottom: 33px;
}

.checks legend {
    margin-bottom: 18px;
}

.checks label {
    height: 24px;
}

.checks input:checked {
    background: url("data:image/svg+xml,%3Csvg xmlns='http://www.w3.org/2000/svg' width='11' height='11'%3E%3Cpath d='M2 5l3 3 4-6' fill='none' stroke='%23000' stroke-width='2'/%3E%3C/svg%3E") #fff;
}

.options button {
    height: 26px;
    border: 1px solid #acacac;
    background: linear-gradient(#f2f2f2, #e4e4e4);
}

.options .wide-btn {
    width: 120px;
    margin: 0 0 21px 8px;
}

.options .small-btn {
    width: 80px;
    margin-left: 4px;
}
```
